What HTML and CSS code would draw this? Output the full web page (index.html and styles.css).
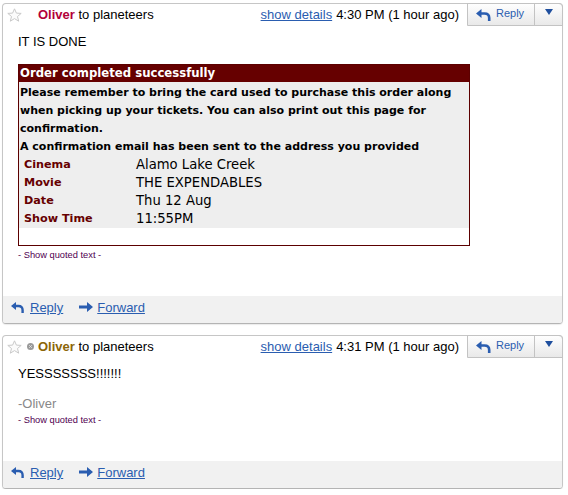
FILE: index.html
```html
<!DOCTYPE html>
<html>
<head>
<meta charset="utf-8">
<link rel="stylesheet" href="styles.css">
</head>
<body>
<div class="thread">
  <div class="msg">
    <div class="hdr">
      <svg class="star" width="15" height="14" viewBox="0 0 15 14"><polygon points="7.5,0.8 9.4,5.1 14.2,5.4 10.5,8.5 11.7,13.2 7.5,10.6 3.3,13.2 4.5,8.5 0.8,5.4 5.6,5.1" fill="#fbfbfb" stroke="#c9c9c9" stroke-width="1"/></svg>
      <span class="presence hidden"></span>
      <span class="from"><b class="name name-red">Oliver</b> to planeteers</span>
      <span class="grow"></span>
      <a class="details" href="#">show details</a>
      <span class="time">4:30 PM (1 hour ago)</span>
      <div class="rbtn">
        <div class="rbtn-main">
          <svg class="rbtn-ico" width="15" height="12" viewBox="0 0 15 12"><path d="M0 4.5 L5.5 0 V9 Z" fill="#2a5db0"/><path d="M4.5 4.5 H8.5 Q13.2 4.5 13.2 9 V12" fill="none" stroke="#2a5db0" stroke-width="2.6"/></svg>
          <span>Reply</span>
        </div>
        <div class="rbtn-drop"><span class="tri"></span></div>
      </div>
    </div>
    <div class="body">
      <div class="line">IT IS DONE</div>
      <div class="order">
        <div class="order-title">Order completed successfully</div>
        <div class="order-main">
          <div class="order-note">Please remember to bring the card used to purchase this order along when picking up your tickets. You can also print out this page for confirmation.<br>A confirmation email has been sent to the address you provided</div>
          <div class="order-rows">
            <div class="lbl">Cinema</div><div class="val">Alamo Lake Creek</div>
            <div class="lbl">Movie</div><div class="val">THE EXPENDABLES</div>
            <div class="lbl">Date</div><div class="val">Thu 12 Aug</div>
            <div class="lbl">Show Time</div><div class="val">11:55PM</div>
          </div>
        </div>
        <div class="order-pad"></div>
      </div>
      <div class="quoted">- Show quoted text -</div>
    </div>
    <div class="foot">
      <svg class="f-reply" width="13" height="11" viewBox="0 0 13 11"><path d="M0 4 L5 0 V8 Z" fill="#2a5db0"/><path d="M4 4 H7.5 Q11.6 4 11.6 8 V11" fill="none" stroke="#2a5db0" stroke-width="2.4"/></svg>
      <a href="#" class="f-link">Reply</a>
      <svg class="f-fwd" width="14" height="10" viewBox="0 0 14 10"><path d="M0 3.5 H8 V0 L14 5 L8 10 V6.5 H0 Z" fill="#2a5db0"/></svg>
      <a href="#" class="f-link">Forward</a>
    </div>
  </div>

  <div class="msg">
    <div class="hdr">
      <svg class="star" width="15" height="14" viewBox="0 0 15 14"><polygon points="7.5,0.8 9.4,5.1 14.2,5.4 10.5,8.5 11.7,13.2 7.5,10.6 3.3,13.2 4.5,8.5 0.8,5.4 5.6,5.1" fill="#fbfbfb" stroke="#c9c9c9" stroke-width="1"/></svg>
      <span class="presence"><svg width="7" height="7" viewBox="0 0 7 7"><circle cx="3.5" cy="3.5" r="3.5" fill="#9a9a9a"/><path d="M2.2 2.2 L4.8 4.8 M4.8 2.2 L2.2 4.8" stroke="#e6e6e6" stroke-width="0.9"/></svg></span>
      <span class="from"><b class="name name-gold">Oliver</b> to planeteers</span>
      <span class="grow"></span>
      <a class="details" href="#">show details</a>
      <span class="time">4:31 PM (1 hour ago)</span>
      <div class="rbtn">
        <div class="rbtn-main">
          <svg class="rbtn-ico" width="15" height="12" viewBox="0 0 15 12"><path d="M0 4.5 L5.5 0 V9 Z" fill="#2a5db0"/><path d="M4.5 4.5 H8.5 Q13.2 4.5 13.2 9 V12" fill="none" stroke="#2a5db0" stroke-width="2.6"/></svg>
          <span>Reply</span>
        </div>
        <div class="rbtn-drop"><span class="tri"></span></div>
      </div>
    </div>
    <div class="body">
      <div class="line">YESSSSSSS!!!!!!!</div>
      <div class="line">&nbsp;</div>
      <div class="line sig">-Oliver</div>
      <div class="quoted">- Show quoted text -</div>
    </div>
    <div class="foot">
      <svg class="f-reply" width="13" height="11" viewBox="0 0 13 11"><path d="M0 4 L5 0 V8 Z" fill="#2a5db0"/><path d="M4 4 H7.5 Q11.6 4 11.6 8 V11" fill="none" stroke="#2a5db0" stroke-width="2.4"/></svg>
      <a href="#" class="f-link">Reply</a>
      <svg class="f-fwd" width="14" height="10" viewBox="0 0 14 10"><path d="M0 3.5 H8 V0 L14 5 L8 10 V6.5 H0 Z" fill="#2a5db0"/></svg>
      <a href="#" class="f-link">Forward</a>
    </div>
  </div>
</div>
</body>
</html>
```

FILE: styles.css
```css
html, body {
  margin: 0;
  padding: 0;
  background: #fff;
}
body {
  font-family: "Liberation Sans", Arial, sans-serif;
  font-size: 13px;
  color: #000;
}
.thread {
  padding: 3px 0 0 2px;
  display: flex;
  flex-direction: column;
  gap: 11px;
}
.msg {
  width: 561px;
  box-sizing: border-box;
  border: 1px solid #c6c6c6;
  border-bottom-color: #b4b4b4;
  border-radius: 4px;
  box-shadow: 0 1px 1px rgba(0, 0, 0, 0.08);
  display: flex;
  flex-direction: column;
}
.hdr {
  height: 26px;
  box-sizing: border-box;
  padding: 3px 0 0 4px;
  display: flex;
  align-items: flex-start;
  line-height: 15px;
}
.star {
  margin-top: 1px;
  flex: none;
}
.presence {
  width: 7px;
  height: 7px;
  margin: 4px 4px 0 5px;
  display: flex;
  flex: none;
}
.presence.hidden {
  visibility: hidden;
}
.name {
  font-weight: bold;
}
.name-red {
  color: #b3003a;
}
.name-gold {
  color: #8c6608;
}
.grow {
  flex: 1;
}
.details {
  color: #2a5db0;
  text-decoration: underline;
  margin-right: 4px;
}
.time {
  margin-right: 8px;
}
.rbtn {
  display: flex;
  margin: -4px -1px 0 0;
  height: 23px;
  box-sizing: border-box;
  border: 1px solid #c3c3c3;
  border-top-right-radius: 4px;
  background: linear-gradient(#fefefe, #e9e9e9);
  flex: none;
}
.rbtn-main {
  width: 66px;
  display: flex;
  align-items: flex-start;
  padding: 3px 0 0 8px;
  box-sizing: border-box;
  font-size: 11px;
  line-height: 13px;
  color: #2a5db0;
}
.rbtn-ico {
  margin: 2px 5px 0 0;
  flex: none;
}
.rbtn-drop {
  width: 26px;
  border-left: 1px solid #c3c3c3;
  display: flex;
  justify-content: center;
  padding-top: 5px;
  padding-left: 1px;
}
.tri {
  width: 0;
  height: 0;
  border-left: 4px solid transparent;
  border-right: 4px solid transparent;
  border-top: 6px solid #1f4f9e;
}
.body {
  padding: 4px 0 35px 15px;
}
.line {
  line-height: 15px;
}
.sig {
  color: #888;
}
.order {
  width: 452px;
  box-sizing: border-box;
  margin-top: 15px;
  border: 1px solid #5c0000;
  font-family: "DejaVu Sans", Verdana, sans-serif;
}
.order-title {
  background: #660000;
  color: #fff;
  font-weight: bold;
  font-size: 11.7px;
  line-height: 17px;
  padding-left: 1px;
}
.order-main {
  background: #eeeeee;
  padding-left: 1px;
}
.order-note {
  font-size: 11px;
  font-weight: bold;
  line-height: 18px;
  padding-top: 2px;
  color: #000;
}
.order-rows {
  display: grid;
  grid-template-columns: 116px auto;
  line-height: 18px;
}
.lbl {
  font-size: 11.2px;
  font-weight: bold;
  color: #660000;
  padding-left: 4px;
}
.val {
  font-size: 13.2px;
}
.order-pad {
  height: 17px;
  background: #fff;
}
.quoted {
  margin-top: 3px;
  font-size: 9.3px;
  line-height: 12px;
  color: #500050;
}
.foot {
  background: #f1f1f1;
  padding: 4px 0 8px 8px;
  line-height: 15px;
  display: flex;
  align-items: center;
  border-radius: 0 0 3px 3px;
}
.f-reply {
  margin-right: 6px;
  flex: none;
}
.f-fwd {
  margin: -1px 4px 0 16px;
  flex: none;
}
.f-link {
  color: #2a5db0;
  text-decoration: underline;
}
```
